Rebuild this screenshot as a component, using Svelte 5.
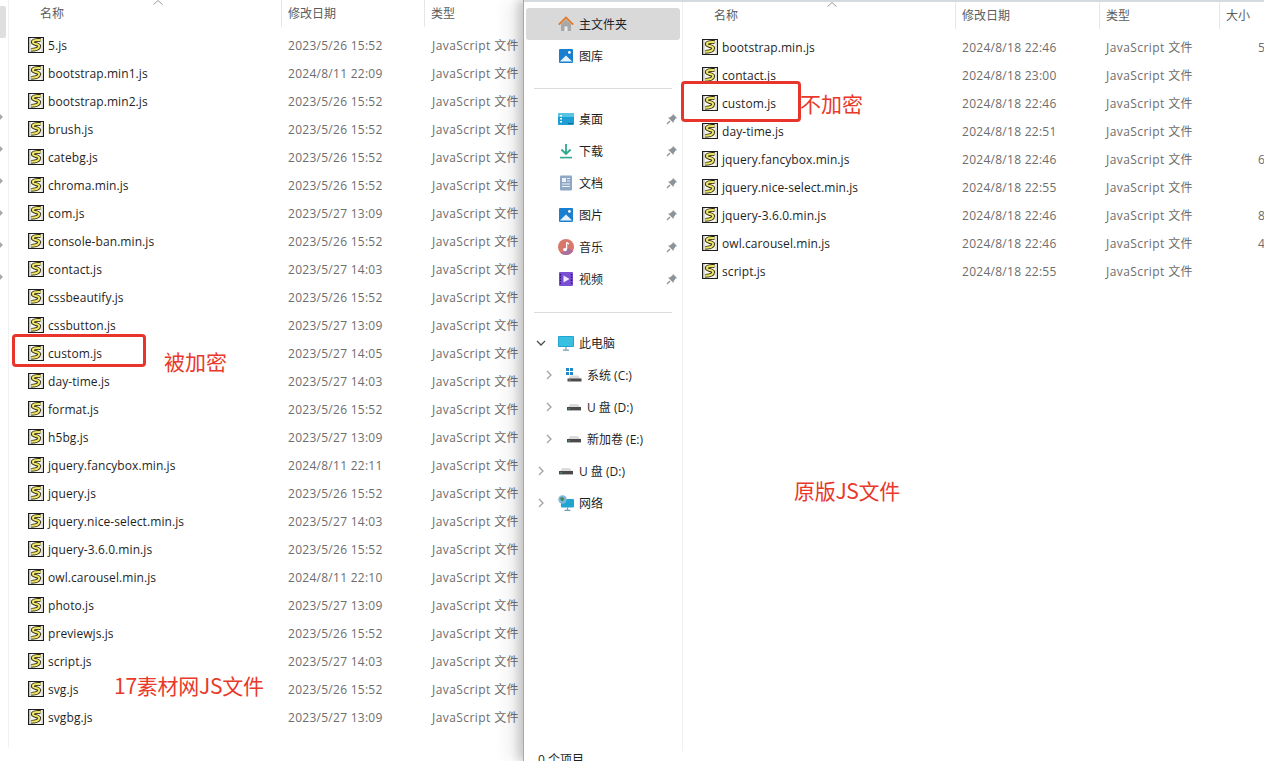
<script>
  const leftFiles = [
    ['5.js','2023/5/26 15:52'],['bootstrap.min1.js','2024/8/11 22:09'],['bootstrap.min2.js','2023/5/26 15:52'],
    ['brush.js','2023/5/26 15:52'],['catebg.js','2023/5/26 15:52'],['chroma.min.js','2023/5/26 15:52'],
    ['com.js','2023/5/27 13:09'],['console-ban.min.js','2023/5/26 15:52'],['contact.js','2023/5/27 14:03'],
    ['cssbeautify.js','2023/5/26 15:52'],['cssbutton.js','2023/5/27 13:09'],['custom.js','2023/5/27 14:05'],
    ['day-time.js','2023/5/27 14:03'],['format.js','2023/5/26 15:52'],['h5bg.js','2023/5/27 13:09'],
    ['jquery.fancybox.min.js','2024/8/11 22:11'],['jquery.js','2023/5/26 15:52'],['jquery.nice-select.min.js','2023/5/27 14:03'],
    ['jquery-3.6.0.min.js','2023/5/26 15:52'],['owl.carousel.min.js','2024/8/11 22:10'],['photo.js','2023/5/27 13:09'],
    ['previewjs.js','2023/5/26 15:52'],['script.js','2023/5/27 14:03'],['svg.js','2023/5/26 15:52'],['svgbg.js','2023/5/27 13:09']
  ];
  const rightFiles = [
    ['bootstrap.min.js','2024/8/18 22:46','5'],['contact.js','2024/8/18 23:00',''],['custom.js','2024/8/18 22:46',''],
    ['day-time.js','2024/8/18 22:51',''],['jquery.fancybox.min.js','2024/8/18 22:46','6'],['jquery.nice-select.min.js','2024/8/18 22:55',''],
    ['jquery-3.6.0.min.js','2024/8/18 22:46','8'],['owl.carousel.min.js','2024/8/18 22:46','4'],['script.js','2024/8/18 22:55','']
  ];
  const quick = [['桌面','desk'],['下载','down'],['文档','doc'],['图片','pic'],['音乐','music'],['视频','video']];
  const tree = [
    ['此电脑','pc','open',0],['系统 (C:)','sys','shut',1],['U 盘 (D:)','drive','shut',1],
    ['新加卷 (E:)','drive','shut',1],['U 盘 (D:)','drive','shut',0],['网络','net','shut',0]
  ];
</script>

{#snippet js()}
  <svg class="js" viewBox="0 0 16 16" width="16" height="16">
    <rect x=".5" y=".5" width="15" height="15" fill="#f7f7ee" stroke="#1c1c1c"/>
    <rect x="1" y="1" width="1.5" height="14" fill="#8a8a8a" opacity=".5"/>
    <rect x="13.5" y="1" width="1.5" height="14" fill="#b5b5b5" opacity=".5"/>
    <path d="M12.6 3C8.6 2.6 4.4 3.4 4.8 5.4 5.2 7.4 11.4 6.8 11.2 9.2 11 11.6 7 12.8 3.2 12.8" fill="none" stroke="#2b2a10" stroke-width="3.8"/>
    <path d="M12.6 3C8.6 2.6 4.4 3.4 4.8 5.4 5.2 7.4 11.4 6.8 11.2 9.2 11 11.6 7 12.8 3.2 12.8" fill="none" stroke="#efe468" stroke-width="2"/>
  </svg>
{/snippet}

{#snippet pin()}
  <svg class="pin" viewBox="0 0 12 12" width="12" height="12">
    <path d="M7 1 11 5 9.6 5.6 7.6 8.4 7.4 10 2 4.6 3.6 4.4 6.4 2.4Z" fill="#8d949a"/>
    <path d="M4 8 1 11" stroke="#8d949a" stroke-width="1.3"/>
  </svg>
{/snippet}

{#snippet chev(dir)}
  <svg class="chev" viewBox="0 0 12 12" width="12" height="12">
    {#if dir === 'open'}
      <path d="M2 4 6 8 10 4" fill="none" stroke="#4a4a4a" stroke-width="1.3"/>
    {:else}
      <path d="M4 2 8 6 4 10" fill="none" stroke="#a2a2a2" stroke-width="1.3"/>
    {/if}
  </svg>
{/snippet}

{#snippet nav(kind)}
  <svg class="nav-ic" viewBox="0 0 16 16" width="16" height="16">
    {#if kind === 'home'}
      <path d="M3 8V15H13V8L8 3.5Z" fill="#a8a8a8"/>
      <path d="M6.5 15V10.5H9.5V15Z" fill="#ececec"/>
      <path d="M.8 8.6 8 1.6 15.2 8.6" fill="none" stroke="#e07b2e" stroke-width="2"/>
    {:else if kind === 'lib' || kind === 'pic'}
      <rect x="1" y="1" width="14" height="14" rx="1" fill="#1b7fd0"/>
      <path d="M1.8 13.6 8 7.5 14.2 13.6Z" fill="#e8f4fc"/>
      <circle cx="11.4" cy="4.4" r="1.4" fill="#fff"/>
    {:else if kind === 'desk'}
      <rect x="0" y="2" width="16" height="12" rx="1" fill="#1e9fd4"/>
      <rect x="0" y="2" width="16" height="4" fill="#59c3e6"/>
      <rect x="2" y="4" width="2" height="1.5" fill="#fff"/><rect x="2" y="7" width="2" height="1.5" fill="#fff"/>
      <rect x="2" y="10" width="2" height="1.5" fill="#fff"/><rect x="10" y="12" width="5" height="1" fill="#0c6e9c"/>
    {:else if kind === 'down'}
      <path d="M8 1V10.5M3.4 6.5 8 11 12.6 6.5" fill="none" stroke="#2fa98d" stroke-width="1.8"/>
      <path d="M2 14.6H14" stroke="#2fa98d" stroke-width="1.6"/>
    {:else if kind === 'doc'}
      <rect x="2" y="0.5" width="12" height="15" rx="1" fill="#8fa6c4"/>
      <rect x="4" y="3" width="4" height="4" fill="#eef3f8"/>
      <path d="M9 3.5H12M9 6H12M4 9H12M4 11.5H12" stroke="#eef3f8" stroke-width="1"/>
    {:else if kind === 'music'}
      <circle cx="8" cy="8" r="8" fill="#d9776a"/>
      <path d="M8 8A8 8 0 0 1 2.4 13.7 8 8 0 0 0 15 12Z" fill="#ab6f9c"/>
      <path d="M8.6 3.4V10.4" stroke="#fff" stroke-width="1.3"/>
      <ellipse cx="7" cy="10.6" rx="2" ry="1.6" fill="#fff"/>
      <path d="M8.6 3.4 11 5" stroke="#fff" stroke-width="1.3"/>
    {:else if kind === 'video'}
      <rect x="1" y="1" width="14" height="14" rx="1" fill="#7a4fd6"/>
      <path d="M5.5 4.5 11.5 8 5.5 11.5Z" fill="#f2e8ff"/>
      <path d="M2.5 3V13" stroke="#2c1570" stroke-width="1.4" stroke-dasharray="1.4 1.4"/>
      <path d="M13.5 3V13" stroke="#2c1570" stroke-width="1.4" stroke-dasharray="1.4 1.4"/>
    {:else if kind === 'pc'}
      <rect x="0" y="1" width="16" height="11" rx="1" fill="#1fa5d0"/>
      <rect x="1" y="2" width="14" height="9" fill="#39bfe0"/>
      <path d="M8 12V15M5 15.2H11" stroke="#7c9bab" stroke-width="1.2"/>
    {:else if kind === 'sys'}
      <path d="M0 1H3V4H0ZM4 1H7V4H4ZM0 5H3V8H0ZM4 5H7V8H4Z" fill="#1e88c9"/>
      <path d="M3 10 5 8.5H12.5L14.5 12H3Z" fill="#d9d9d9"/>
      <rect x="1.5" y="11.5" width="14" height="3" fill="#4a4a4a"/>
      <rect x="3" y="12.6" width="1.4" height="1" fill="#3fd05c"/>
    {:else if kind === 'drive'}
      <path d="M2.5 7 4.5 5H12L14 8H2.5Z" fill="#dcdcdc"/>
      <rect x="1" y="8" width="14" height="3.4" fill="#4a4a4a"/>
      <rect x="2.5" y="9.2" width="1.4" height="1" fill="#3fd05c"/>
    {:else if kind === 'net'}
      <rect x="3" y="4" width="13" height="8.5" rx="1" fill="#1fa5d0"/>
      <path d="M9.5 12.5V15M6.5 15.3H12.5" stroke="#7c9bab" stroke-width="1.2"/>
      <circle cx="4.5" cy="4.5" r="4.2" fill="#7fb7dc"/>
      <path d="M2 3 4.5 2 6.5 4 4.5 6.5 3 5.5Z" fill="#3f8a5c"/>
    {/if}
  </svg>
{/snippet}

<div class="desktop">
  <section class="win left">
    <div class="strip">
      <div class="scrollbar"></div>
      {#each [0,1,2,3,4,5] as i (i)}<i class="tick"></i>{/each}
    </div>
    <div class="pane">
      <header class="head lh">
        <span class="h1">名称<svg class="sort" viewBox="0 0 10 5" width="10" height="5"><path d="M.5 4.5 5 .5 9.5 4.5" fill="none" stroke="#9a9a9a"/></svg></span>
        <span class="h2">修改日期</span>
        <span class="h3">类型</span>
      </header>
      {#each leftFiles as f (f[0])}
        <div class="row">
          <span class="name">{@render js()}<em>{f[0]}</em></span>
          <span class="date">{f[1]}</span>
          <span class="type">JavaScript 文件</span>
        </div>
      {/each}
    </div>
  </section>

  <section class="win right">
    <aside class="side">
      <div class="item sel">{@render nav('home')}<span>主文件夹</span></div>
      <div class="item">{@render nav('lib')}<span>图库</span></div>
      <hr />
      <div class="quick">
        {#each quick as q (q[1])}
          <div class="item">{@render nav(q[1])}<span>{q[0]}</span>{@render pin()}</div>
        {/each}
      </div>
      <hr />
      <div class="tree">
        {#each tree as t, i (i)}
          <div class="item titem" class:deep={t[3] === 1}>
            {@render chev(t[2])}
            {@render nav(t[1])}<span>{t[0]}</span>
          </div>
        {/each}
      </div>
      <div class="status">0 个项目</div>
    </aside>
    <div class="pane rpane">
      <header class="head rh">
        <span class="h1">名称<svg class="sort" viewBox="0 0 10 5" width="10" height="5"><path d="M.5 4.5 5 .5 9.5 4.5" fill="none" stroke="#9a9a9a"/></svg></span>
        <span class="h2">修改日期</span>
        <span class="h3">类型</span>
        <span class="h4">大小</span>
      </header>
      {#each rightFiles as f (f[0])}
        <div class="row">
          <span class="name">{@render js()}<em>{f[0]}</em></span>
          <span class="date">{f[1]}</span>
          <span class="type">JavaScript 文件</span>
          <span class="size">{f[2]}</span>
        </div>
      {/each}
    </div>
  </section>

  <div class="mark b1"></div>
  <div class="mark b2"></div>
  <div class="note n1">被加密</div>
  <div class="note n2">不加密</div>
  <div class="note n3">17素材网JS文件</div>
  <div class="note n4">原版JS文件</div>
</div>

<style>
  :global(body) { margin: 0; background: #fff; }
  .desktop {
    position: relative; width: 1264px; height: 761px; overflow: hidden; background: #fff;
    font-family: "Open Sans", "Noto Sans CJK SC", sans-serif; font-size: 12px; color: #1f1f1f;
  }
  .win { position: absolute; top: 0; height: 761px; display: flex; background: #fff; }
  .left { left: 0; width: 524px; }
  .right { left: 524px; width: 740px; border-top: 2px solid #d4dae0; box-sizing: border-box; box-shadow: -1px 0 0 #a8a8a8, -6px 0 8px rgba(0,0,0,.16), -16px 0 16px rgba(0,0,0,.07); }

  .strip { position: relative; width: 9px; height: 748px; border-right: 1px solid #f1f1f1; flex: none; display: flex; flex-direction: column; align-items: flex-start; padding-top: 114px; box-sizing: border-box; gap: 26px; }
  .scrollbar { position: absolute; left: 0; top: 6px; width: 6px; height: 32px; background: #dfdfdf; border-radius: 0 2px 2px 0; }
  .tick { display: block; width: 0; height: 0; border-left: 3px solid #a9a9a9; border-top: 3px solid transparent; border-bottom: 3px solid transparent; }

  .pane { flex: 1; min-width: 0; }
  .head { position: relative; height: 31px; color: #5c5c5c; white-space: nowrap; }
  .head span { position: absolute; top: 5px; line-height: 18px; }
  .sort { position: absolute; left: 113px; top: -5px; }
  .lh .h1 { left: 31px; } .lh .h2 { left: 279px; } .lh .h3 { left: 422px; }
  .lh .h2::before, .lh .h3::before, .rh .h2::before, .rh .h3::before, .rh .h4::before {
    content: ""; position: absolute; left: -7px; top: -5px; height: 27px; border-left: 1px solid #e6e6e6;
  }
  .rh .h1 { left: 31px; } .rh .h2 { left: 279px; } .rh .h3 { left: 423px; } .rh .h4 { left: 543px; }

  .row { display: flex; height: 28px; align-items: center; white-space: nowrap; padding-left: 19px; }
  .name { display: flex; align-items: center; gap: 4px; width: 260px; flex: none; color: #1f1f1f; }
  .name em { font-style: normal; letter-spacing: .08px; }
  .date { width: 144px; flex: none; color: #6d6d6d; letter-spacing: .27px; }
  .type { color: #6d6d6d; flex: none; width: 152px; letter-spacing: .42px; }
  .size { color: #6d6d6d; flex: none; width: 30px; }
  .js { flex: none; }

  .side { position: relative; width: 159px; height: 749px; border-right: 1px solid #f0f0f0; flex: none; padding: 6px 2px 0; box-sizing: border-box; }
  .item { display: flex; align-items: center; height: 32px; gap: 5px; padding-left: 32px; color: #1f1f1f; border-radius: 3px; }
  .nav-ic { flex: none; }
  .sel { background: #d9d9d9; }
  .item span { flex: 1; white-space: nowrap; }
  .pin { flex: none; margin-right: 2px; }
  hr { border: 0; border-top: 1px solid #dcdcdc; margin: 16px 0 14px 8px; width: 138px; }
  .quick + hr { margin-top: 17px; }
  .titem { padding-left: 9px; gap: 0; }
  .titem .nav-ic { margin: 0 5px 0 11px; }
  .deep { padding-left: 17px; }
  .deep .nav-ic { margin-left: 11px; margin-right: 5px; }
  .status { position: absolute; left: 14px; top: 750px; line-height: 16px; white-space: nowrap; }

  .rpane { overflow: hidden; }

  .mark { position: absolute; border: 3px solid #e8352c; border-radius: 4px; box-sizing: border-box; }
  .b1 { left: 12px; top: 334px; width: 134px; height: 33px; }
  .b2 { left: 681px; top: 81px; width: 120px; height: 41px; }
  .note { position: absolute; color: #e8392b; font-size: 21px; line-height: 28px; white-space: nowrap; font-family: "Noto Sans CJK SC", sans-serif; font-weight: 400; }
  .n1 { left: 164px; top: 347px; }
  .n2 { left: 800px; top: 89px; }
  .n3 { left: 114px; top: 671px; letter-spacing: -.25px; }
  .n4 { left: 794px; top: 476px; letter-spacing: -.3px; }
</style>
